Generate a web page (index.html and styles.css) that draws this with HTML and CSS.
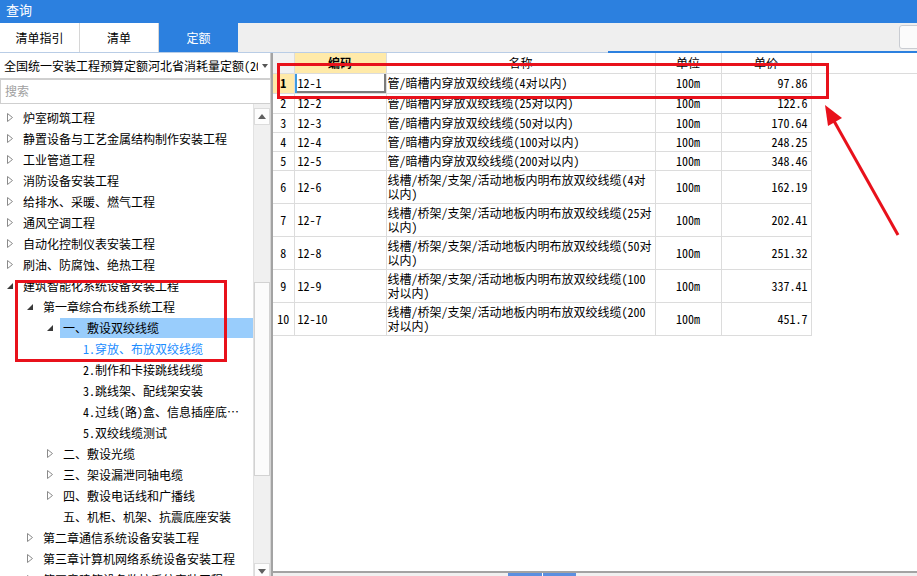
FILE: index.html
```html
<!DOCTYPE html>
<html lang="zh-CN">
<head>
<meta charset="utf-8">
<title>查询</title>
<link rel="stylesheet" href="styles.css">
</head>
<body>
<div class="app">
  <header class="titlebar">查询</header>
  <nav class="tabbar">
    <div class="tab">清单指引</div>
    <div class="tab">清单</div>
    <div class="tab active">定额</div>
    <div class="tabbtn"></div>
  </nav>
  <div class="main">
    <aside class="left">
      <div class="select"><span class="select-text">全国统一安装工程预算定额河北省消耗量定额(2012)</span><span class="caret"></span></div>
      <div class="search">搜索</div>
      <div class="treewrap">
        <div class="tree">
          <div class="node l0"><span class="tg"><svg width="6" height="9" viewBox="0 0 6 9"><polygon points="0.5,0.5 5.5,4.5 0.5,8.5" fill="none" stroke="#8a8a8a"/></svg></span><span class="label">炉室砌筑工程</span></div>
          <div class="node l0"><span class="tg"><svg width="6" height="9" viewBox="0 0 6 9"><polygon points="0.5,0.5 5.5,4.5 0.5,8.5" fill="none" stroke="#8a8a8a"/></svg></span><span class="label">静置设备与工艺金属结构制作安装工程</span></div>
          <div class="node l0"><span class="tg"><svg width="6" height="9" viewBox="0 0 6 9"><polygon points="0.5,0.5 5.5,4.5 0.5,8.5" fill="none" stroke="#8a8a8a"/></svg></span><span class="label">工业管道工程</span></div>
          <div class="node l0"><span class="tg"><svg width="6" height="9" viewBox="0 0 6 9"><polygon points="0.5,0.5 5.5,4.5 0.5,8.5" fill="none" stroke="#8a8a8a"/></svg></span><span class="label">消防设备安装工程</span></div>
          <div class="node l0"><span class="tg"><svg width="6" height="9" viewBox="0 0 6 9"><polygon points="0.5,0.5 5.5,4.5 0.5,8.5" fill="none" stroke="#8a8a8a"/></svg></span><span class="label">给排水、采暖、燃气工程</span></div>
          <div class="node l0"><span class="tg"><svg width="6" height="9" viewBox="0 0 6 9"><polygon points="0.5,0.5 5.5,4.5 0.5,8.5" fill="none" stroke="#8a8a8a"/></svg></span><span class="label">通风空调工程</span></div>
          <div class="node l0"><span class="tg"><svg width="6" height="9" viewBox="0 0 6 9"><polygon points="0.5,0.5 5.5,4.5 0.5,8.5" fill="none" stroke="#8a8a8a"/></svg></span><span class="label">自动化控制仪表安装工程</span></div>
          <div class="node l0"><span class="tg"><svg width="6" height="9" viewBox="0 0 6 9"><polygon points="0.5,0.5 5.5,4.5 0.5,8.5" fill="none" stroke="#8a8a8a"/></svg></span><span class="label">刷油、防腐蚀、绝热工程</span></div>
          <div class="node l0"><span class="tg"><svg width="6" height="6" viewBox="0 0 6 6"><polygon points="6,0 6,6 0,6" fill="#3a3a3a"/></svg></span><span class="label">建筑智能化系统设备安装工程</span></div>
          <div class="node l1"><span class="tg"><svg width="6" height="6" viewBox="0 0 6 6"><polygon points="6,0 6,6 0,6" fill="#3a3a3a"/></svg></span><span class="label">第一章综合布线系统工程</span></div>
          <div class="node l2 sel"><span class="tg"><svg width="6" height="6" viewBox="0 0 6 6"><polygon points="6,0 6,6 0,6" fill="#3a3a3a"/></svg></span><span class="label">一、敷设双绞线缆</span></div>
          <div class="node l3 cur"><span class="tg"></span><span class="label">1.穿放、布放双绞线缆</span></div>
          <div class="node l3"><span class="tg"></span><span class="label">2.制作和卡接跳线线缆</span></div>
          <div class="node l3"><span class="tg"></span><span class="label">3.跳线架、配线架安装</span></div>
          <div class="node l3"><span class="tg"></span><span class="label">4.过线(路)盒、信息插座底盒(接线盒)安装</span></div>
          <div class="node l3"><span class="tg"></span><span class="label">5.双绞线缆测试</span></div>
          <div class="node l2"><span class="tg"><svg width="6" height="9" viewBox="0 0 6 9"><polygon points="0.5,0.5 5.5,4.5 0.5,8.5" fill="none" stroke="#8a8a8a"/></svg></span><span class="label">二、敷设光缆</span></div>
          <div class="node l2"><span class="tg"><svg width="6" height="9" viewBox="0 0 6 9"><polygon points="0.5,0.5 5.5,4.5 0.5,8.5" fill="none" stroke="#8a8a8a"/></svg></span><span class="label">三、架设漏泄同轴电缆</span></div>
          <div class="node l2"><span class="tg"><svg width="6" height="9" viewBox="0 0 6 9"><polygon points="0.5,0.5 5.5,4.5 0.5,8.5" fill="none" stroke="#8a8a8a"/></svg></span><span class="label">四、敷设电话线和广播线</span></div>
          <div class="node l2"><span class="tg"></span><span class="label">五、机柜、机架、抗震底座安装</span></div>
          <div class="node l1"><span class="tg"><svg width="6" height="9" viewBox="0 0 6 9"><polygon points="0.5,0.5 5.5,4.5 0.5,8.5" fill="none" stroke="#8a8a8a"/></svg></span><span class="label">第二章通信系统设备安装工程</span></div>
          <div class="node l1"><span class="tg"><svg width="6" height="9" viewBox="0 0 6 9"><polygon points="0.5,0.5 5.5,4.5 0.5,8.5" fill="none" stroke="#8a8a8a"/></svg></span><span class="label">第三章计算机网络系统设备安装工程</span></div>
          <div class="node l1"><span class="tg"><svg width="6" height="9" viewBox="0 0 6 9"><polygon points="0.5,0.5 5.5,4.5 0.5,8.5" fill="none" stroke="#8a8a8a"/></svg></span><span class="label">第四章建筑设备监控系统安装工程</span></div>
        </div>
        <div class="vscroll">
          <div class="sb-btn up"></div>
          <div class="sb-track"><div class="sb-thumb"></div></div>
          <div class="sb-btn down"></div>
        </div>
      </div>
    </aside>
    <section class="right">
      <div class="gridwrap">
        <table class="grid">
          <colgroup><col class="c-num"><col class="c-code"><col class="c-name"><col class="c-unit"><col class="c-price"></colgroup>
          <thead>
            <tr class="hrow"><th class="num"></th><th class="code">编码</th><th>名称</th><th>单位</th><th>单价</th></tr>
          </thead>
          <tbody>
            <tr class="r20"><td class="num cur">1</td><td class="code focus">12-1</td><td class="name">管/暗槽内穿放双绞线缆(4对以内)</td><td class="unit">100m</td><td class="price">97.86</td></tr>
            <tr class="r20"><td class="num">2</td><td class="code">12-2</td><td class="name">管/暗槽内穿放双绞线缆(25对以内)</td><td class="unit">100m</td><td class="price">122.6</td></tr>
            <tr class="r19"><td class="num">3</td><td class="code">12-3</td><td class="name">管/暗槽内穿放双绞线缆(50对以内)</td><td class="unit">100m</td><td class="price">170.64</td></tr>
            <tr class="r19"><td class="num">4</td><td class="code">12-4</td><td class="name">管/暗槽内穿放双绞线缆(100对以内)</td><td class="unit">100m</td><td class="price">248.25</td></tr>
            <tr class="r19"><td class="num">5</td><td class="code">12-5</td><td class="name">管/暗槽内穿放双绞线缆(200对以内)</td><td class="unit">100m</td><td class="price">348.46</td></tr>
            <tr class="r33"><td class="num">6</td><td class="code">12-6</td><td class="name">线槽/桥架/支架/活动地板内明布放双绞线缆(4对<br>以内)</td><td class="unit">100m</td><td class="price">162.19</td></tr>
            <tr class="r33"><td class="num">7</td><td class="code">12-7</td><td class="name">线槽/桥架/支架/活动地板内明布放双绞线缆(25对<br>以内)</td><td class="unit">100m</td><td class="price">202.41</td></tr>
            <tr class="r33"><td class="num">8</td><td class="code">12-8</td><td class="name">线槽/桥架/支架/活动地板内明布放双绞线缆(50对<br>以内)</td><td class="unit">100m</td><td class="price">251.32</td></tr>
            <tr class="r33"><td class="num">9</td><td class="code">12-9</td><td class="name">线槽/桥架/支架/活动地板内明布放双绞线缆(100<br>对以内)</td><td class="unit">100m</td><td class="price">337.41</td></tr>
            <tr class="r33"><td class="num">10</td><td class="code">12-10</td><td class="name">线槽/桥架/支架/活动地板内明布放双绞线缆(200<br>对以内)</td><td class="unit">100m</td><td class="price">451.7</td></tr>
          </tbody>
        </table>
      </div>
      <div class="foot"><div class="hthumb"></div></div>
    </section>
  </div>

  <div class="mark mark-tree"></div>
  <div class="mark mark-row"></div>
  <svg class="arrow" width="917" height="576" viewBox="0 0 917 576">
    <line x1="898" y1="235" x2="834" y2="121" stroke="#e8111b" stroke-width="3"/>
    <polygon points="825,105 842,118 828,126" fill="#e8111b"/>
  </svg>
</div>
</body>
</html>
```

FILE: styles.css
```css
* { box-sizing: border-box; }
html, body { margin: 0; padding: 0; }
body {
  width: 917px;
  height: 576px;
  overflow: hidden;
  background: #fff;
  color: #000;
  font-family: "Noto Sans Mono CJK SC", "Noto Sans CJK SC", "Liberation Sans", sans-serif;
  font-size: 12px;
}
.app { position: relative; width: 917px; height: 576px; overflow: hidden; }

/* title */
.titlebar {
  height: 23px;
  background: #2c80df;
  color: #fff;
  font-family: "Noto Sans CJK SC", sans-serif;
  font-size: 13px;
  line-height: 20px;
  padding-left: 6px;
}

/* tabs */
.tabbar {
  position: relative;
  display: flex;
  height: 30px;
  background: #efefef;
  border-bottom: 1px solid #b9cde6;
  font-family: "Noto Sans CJK SC", sans-serif;
}
.tabbar::after {
  content: "";
  position: absolute;
  left: 608px; right: 0; bottom: -1px;
  height: 2px;
  background: #2c80df;
}
.tab {
  width: 79px;
  background: #fff;
  border-right: 1px solid #d6d6d6;
  text-align: center;
  line-height: 29px;
  font-size: 12px;
}
.tab:first-child { width: 80px; }
.tab.active { background: #2c80df; color: #fff; border-right: none; }
.tabbtn {
  margin: 2px -3px 0 auto;
  width: 21px;
  height: 24px;
  background: #fbfbfb;
  border: 1px solid #c9ccd2;
  border-radius: 3px;
}

/* main */
.main { display: flex; height: 527px; }
.left { width: 271px; flex: none; display: flex; flex-direction: column; }
.select {
  display: flex;
  height: 26px;
  border-bottom: 1px solid #d0d0d0;
  border-right: 1px solid #c8c8c8;
  align-items: center;
}
.select-text {
  width: 258px;
  padding-left: 4px;
  white-space: nowrap;
  overflow: hidden;
}
.caret {
  margin-left: 4px;
  width: 0; height: 0;
  border-left: 3px solid transparent;
  border-right: 3px solid transparent;
  border-top: 4px solid #555;
}
.search {
  height: 25px;
  border: 1px solid #cfcfcf;
  color: #a0a0a0;
  padding-left: 4px;
  line-height: 22px;
}
.treewrap { flex: 1; display: flex; min-height: 0; }
.tree { width: 253px; flex: none; padding-top: 3px; overflow: hidden; }
.node { display: flex; align-items: center; height: 21px; white-space: nowrap; }
.node.l0 { padding-left: 6px; }
.node.l1 { padding-left: 26px; }
.node.l2 { padding-left: 46px; }
.node.l3 { padding-left: 66px; }
.tg { width: 12px; flex: none; margin-right: 2px; display: flex; align-items: center; }
.tg svg { display: block; margin-left: 1px; }
.label {
  flex: 1;
  min-width: 0;
  overflow: hidden;
  text-overflow: ellipsis;
  padding: 0 12px 0 3px;
  line-height: 20px;
}
.node.sel .label { background: #99cdfc; }
.node.cur .label { color: #1a8cff; }

.vscroll {
  width: 18px;
  flex: none;
  display: flex;
  flex-direction: column;
  background: #f0f0f0;
  border-left: 1px solid #e2e2e2;
  border-right: 1px solid #d4d4d4;
}
.sb-btn {
  height: 17px;
  background: #fdfdfd;
  border: 1px solid #dcdcdc;
  display: flex;
  align-items: center;
  justify-content: center;
  flex: none;
}
.sb-btn.up { margin-top: 4px; }
.sb-btn::before {
  content: "";
  width: 0; height: 0;
  border-left: 4px solid transparent;
  border-right: 4px solid transparent;
}
.sb-btn.up::before { border-bottom: 5px solid #606060; }
.sb-btn.down::before { border-top: 5px solid #606060; }
.sb-track { flex: 1; padding-top: 157px; }
.sb-thumb { height: 194px; background: #fbfbfb; border: 1px solid #d2d2d2; }

/* right */
.right { flex: 1; display: flex; flex-direction: column; border-left: 2px solid #a3a3a3; }
.gridwrap {
  flex: 1;
  border-bottom: 2px solid #a3a3a3;
  background: linear-gradient(#dcdcdc, #dcdcdc) 0 20px / 100% 1px no-repeat #fff;
}
.grid {
  border-collapse: collapse;
  table-layout: fixed;
  width: 538px;
}
.c-num { width: 21px; }
.c-code { width: 92px; }
.c-name { width: 269px; }
.c-unit { width: 66px; }
.c-price { width: 90px; }
.grid th, .grid td {
  border: 1px solid #dcdcdc;
  padding: 0;
  font-weight: normal;
  line-height: 14px;
  white-space: nowrap;
  overflow: hidden;
}
.grid tr > :first-child { border-left: none; }
.grid thead th { border-top: none; text-align: center; background: #fff; }
.hrow { height: 20px; }
.r20 { height: 20px; }
.r19 { height: 19px; }
.r33 { height: 33px; }
.grid th.num { background: #f2f2f2; }
.grid th.code { background: #ffeaa9; font-weight: bold; }
.grid td.num { text-align: center; }
.grid td.num.cur { background: #ffeaa9; font-weight: bold; }
.grid td.code { padding-left: 3px; }
.grid td.focus { box-shadow: inset 2px 0 #3c9be0, inset -2px -2px #7c7c7c; }
.grid td.name { padding-left: 1px; }
.grid td.unit { text-align: center; }
.grid td.price { text-align: right; padding-right: 3px; }

.foot { height: 7px; background: #f0f0f0; flex: none; }
.hthumb {
  margin-left: 235px;
  width: 68px;
  height: 4px;
  background: linear-gradient(90deg, #5b8fe0 0 34px, #fff 34px 35px, #5b8fe0 35px);
}

/* annotations */
.mark { position: absolute; border: 3px solid #e8111b; pointer-events: none; }
.mark-tree { left: 15px; top: 280px; width: 212px; height: 82px; }
.mark-row { left: 277px; top: 63px; width: 552px; height: 36px; }
.arrow { position: absolute; left: 0; top: 0; pointer-events: none; }
```
